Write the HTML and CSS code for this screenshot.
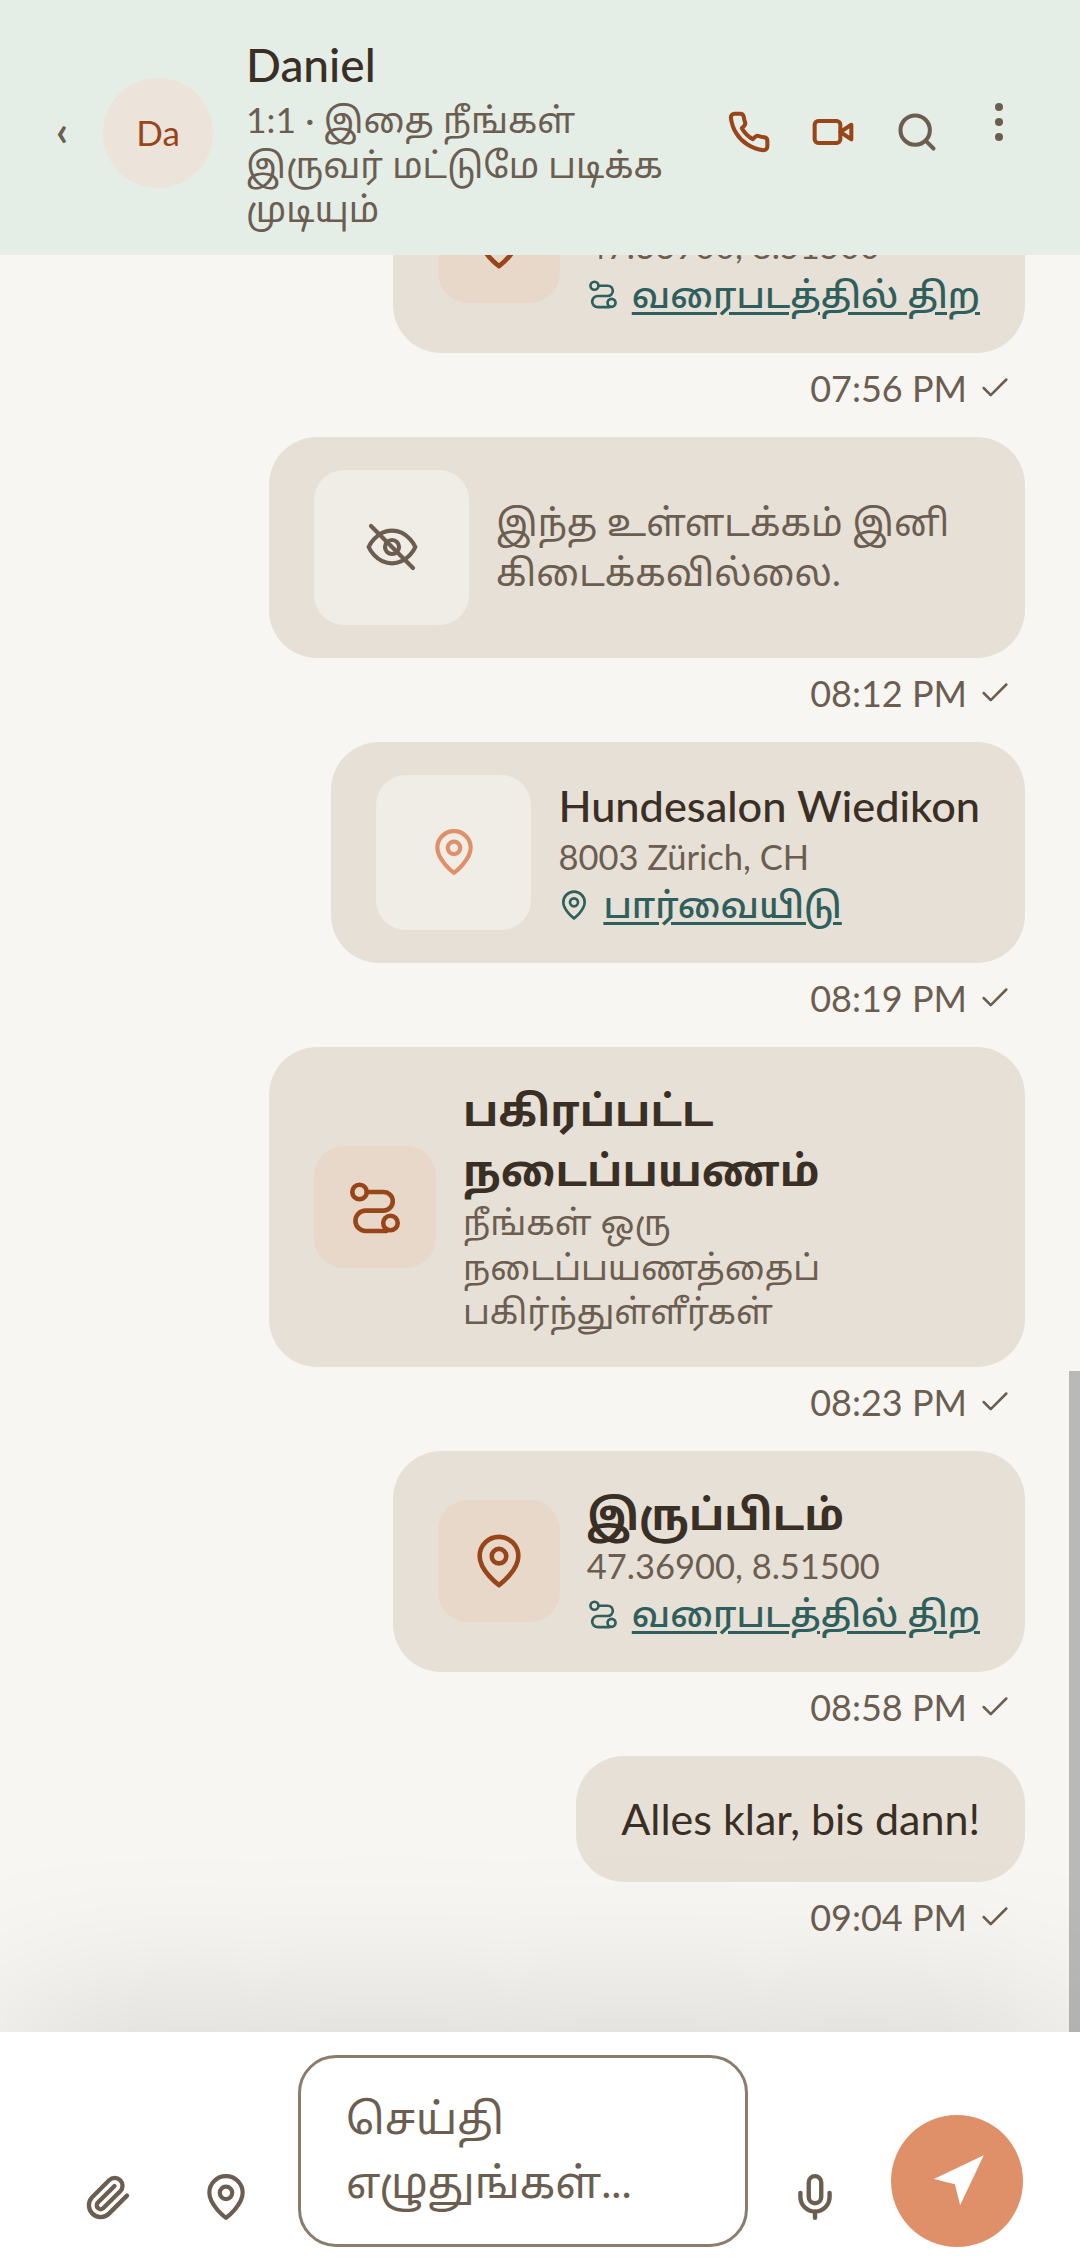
FILE: index.html
```html
<!DOCTYPE html>
<html lang="ta">
<head>
<meta charset="utf-8" />
<title>Daniel</title>
<link rel="stylesheet" href="styles.css">
</head>
<body>
<section class="app">
  <header class="top">
    <span class="back">‹</span>
    <div class="avatar">Da</div>
    <div class="who">
      <h1>Daniel</h1>
      <p>1:1 · இதை நீங்கள் இருவர் மட்டுமே படிக்க முடியும்</p>
    </div>
    <div class="actions">
      <svg class="ic rust" viewBox="0 0 24 24"><path d="M22 16.92v3a2 2 0 0 1-2.18 2 19.79 19.79 0 0 1-8.63-3.07 19.5 19.5 0 0 1-6-6 19.79 19.79 0 0 1-3.07-8.67A2 2 0 0 1 4.11 2h3a2 2 0 0 1 2 1.72 12.84 12.84 0 0 0 .7 2.81 2 2 0 0 1-.45 2.11L8.09 9.91a16 16 0 0 0 6 6l1.27-1.27a2 2 0 0 1 2.11-.45 12.84 12.84 0 0 0 2.81.7A2 2 0 0 1 22 16.92z"/></svg>
      <svg class="ic rust" viewBox="0 0 24 24"><rect x="2" y="6" width="14" height="12" rx="2"/><path d="m22 8-6 4 6 4V8Z"/></svg>
      <svg class="ic" viewBox="0 0 24 24"><circle cx="11" cy="11" r="8"/><path d="m21 21-4.3-4.3"/></svg>
      <div class="dots"><i></i><i></i><i></i></div>
    </div>
  </header>

  <main class="chat">
    <div class="msg">
      <div class="bubble">
        <div class="tile warm"><svg class="ic pin-l rust" viewBox="0 0 24 24"><path d="M20 10c0 6-8 12-8 12s-8-6-8-12a8 8 0 0 1 16 0Z"/><circle cx="12" cy="10" r="3"/></svg></div>
        <div class="body">
          <h2>இருப்பிடம்</h2>
          <p class="sub">47.36900, 8.51500</p>
          <p class="link"><svg class="ic-s" viewBox="0 0 24 24"><circle cx="5.6" cy="5.8" r="3"/><path d="M8.6 5.8h6.9a3.85 3.85 0 0 1 0 7.7H8.1a4.2 4.2 0 0 0 0 8.4h8.6"/><circle cx="18.4" cy="18.6" r="3"/></svg><a>வரைபடத்தில் திற</a></p>
        </div>
      </div>
      <div class="time">07:56 PM <svg class="tick" viewBox="0 0 24 24"><path d="M20 6 9 17l-5-5"/></svg></div>
    </div>

    <div class="msg">
      <div class="bubble">
        <div class="tile big"><svg class="ic eye" viewBox="0 0 24 24"><path d="M2 12s3-7 10-7 10 7 10 7-3 7-10 7-10-7-10-7Z"/><circle cx="12" cy="12" r="3"/><path d="m3 3 18 18"/></svg></div>
        <p class="note">இந்த உள்ளடக்கம் இனி கிடைக்கவில்லை.</p>
      </div>
      <div class="time">08:12 PM <svg class="tick" viewBox="0 0 24 24"><path d="M20 6 9 17l-5-5"/></svg></div>
    </div>

    <div class="msg">
      <div class="bubble">
        <div class="tile big"><svg class="ic pin-m peach" viewBox="0 0 24 24"><path d="M20 10c0 6-8 12-8 12s-8-6-8-12a8 8 0 0 1 16 0Z"/><circle cx="12" cy="10" r="3"/></svg></div>
        <div class="body">
          <h3>Hundesalon Wiedikon</h3>
          <p class="sub">8003 Zürich, CH</p>
          <p class="link"><svg class="ic-s" viewBox="0 0 24 24"><path d="M20 10c0 6-8 12-8 12s-8-6-8-12a8 8 0 0 1 16 0Z"/><circle cx="12" cy="10" r="3"/></svg><a>பார்வையிடு</a></p>
        </div>
      </div>
      <div class="time">08:19 PM <svg class="tick" viewBox="0 0 24 24"><path d="M20 6 9 17l-5-5"/></svg></div>
    </div>

    <div class="msg">
      <div class="bubble">
        <div class="tile warm"><svg class="ic pin-l rust" viewBox="0 0 24 24"><circle cx="5.6" cy="5.8" r="3"/><path d="M8.6 5.8h6.9a3.85 3.85 0 0 1 0 7.7H8.1a4.2 4.2 0 0 0 0 8.4h8.6"/><circle cx="18.4" cy="18.6" r="3"/></svg></div>
        <div class="body narrow">
          <h2>பகிரப்பட்ட நடைப்பயணம்</h2>
          <p class="sub">நீங்கள் ஒரு நடைப்பயணத்தைப் பகிர்ந்துள்ளீர்கள்</p>
        </div>
      </div>
      <div class="time">08:23 PM <svg class="tick" viewBox="0 0 24 24"><path d="M20 6 9 17l-5-5"/></svg></div>
    </div>

    <div class="msg">
      <div class="bubble">
        <div class="tile warm"><svg class="ic pin-l rust" viewBox="0 0 24 24"><path d="M20 10c0 6-8 12-8 12s-8-6-8-12a8 8 0 0 1 16 0Z"/><circle cx="12" cy="10" r="3"/></svg></div>
        <div class="body">
          <h2>இருப்பிடம்</h2>
          <p class="sub">47.36900, 8.51500</p>
          <p class="link"><svg class="ic-s" viewBox="0 0 24 24"><circle cx="5.6" cy="5.8" r="3"/><path d="M8.6 5.8h6.9a3.85 3.85 0 0 1 0 7.7H8.1a4.2 4.2 0 0 0 0 8.4h8.6"/><circle cx="18.4" cy="18.6" r="3"/></svg><a>வரைபடத்தில் திற</a></p>
        </div>
      </div>
      <div class="time">08:58 PM <svg class="tick" viewBox="0 0 24 24"><path d="M20 6 9 17l-5-5"/></svg></div>
    </div>

    <div class="msg">
      <div class="bubble plain">Alles klar, bis dann!</div>
      <div class="time">09:04 PM <svg class="tick" viewBox="0 0 24 24"><path d="M20 6 9 17l-5-5"/></svg></div>
    </div>

    <div class="thumb"></div>
  </main>

  <footer class="bar">
    <div class="tool"><svg class="ic clip" viewBox="0 0 24 24"><path d="m21.44 11.05-9.19 9.19a6 6 0 0 1-8.49-8.49l8.57-8.57A4 4 0 1 1 18 8.84l-8.59 8.57a2 2 0 0 1-2.83-2.83l8.49-8.48"/></svg></div>
    <div class="tool"><svg class="ic pin-m" viewBox="0 0 24 24"><path d="M20 10c0 6-8 12-8 12s-8-6-8-12a8 8 0 0 1 16 0Z"/><circle cx="12" cy="10" r="3"/></svg></div>
    <div class="input">செய்தி எழுதுங்கள்...</div>
    <div class="tool"><svg class="ic mic" viewBox="0 0 24 24"><path d="M12 2a3 3 0 0 0-3 3v7a3 3 0 0 0 6 0V5a3 3 0 0 0-3-3Z"/><path d="M19 10v2a7 7 0 0 1-14 0v-2"/><path d="M12 19v3"/></svg></div>
    <div class="send"><svg viewBox="0 0 24 24"><polygon points="3 11 22 2 13 21 11 13 3 11"/></svg></div>
  </footer>
</section>
</body>
</html>
```

FILE: styles.css
```css
* {
  box-sizing: border-box;
}

body {
  margin: 0;
  font: normal 36px/1.25 Lato, "Noto Sans Tamil", "Noto Sans", sans-serif;
  color: #3a2f25;
  background: #f8f6f3;
}

h1, h2, h3, p {
  margin: 0;
}

.app {
  width: 1080px;
  height: 2268px;
  display: flex;
  flex-direction: column;
  overflow: hidden;
}

/* header */

.top {
  flex: none;
  height: 255px;
  display: flex;
  align-items: flex-start;
  background: #e5ede7;
  position: relative;
  z-index: 2;
}

.back {
  width: 103px;
  padding: 108px 0 0 56px;
  font-size: 42px;
  font-weight: 700;
  line-height: 44px;
  color: #6b5e50;
}

.avatar {
  flex: none;
  width: 110px;
  height: 110px;
  margin-top: 78px;
  border-radius: 50%;
  background: #ece4da;
  color: #98451a;
  font-size: 35px;
  display: flex;
  align-items: center;
  justify-content: center;
}

.who {
  width: 440px;
  margin: 36px 0 0 33px;
}

.who h1 {
  font-size: 46px;
  line-height: 58px;
  font-weight: 500;
}

.who p {
  font-size: 35.5px;
  line-height: 44.5px;
  color: #6b5e50;
  padding-top: 4px;
}

.actions {
  display: flex;
  align-items: center;
  gap: 40px;
  margin: 110px 0 0 41px;
}

.actions .ic {
  stroke-width: 2.2;
}

.dots {
  display: flex;
  flex-direction: column;
  gap: 7px;
  margin: -20px 0 0 16px;
}

.dots i {
  width: 8px;
  height: 8px;
  border-radius: 50%;
  background: #6b5e50;
}

/* icons */

.ic, .ic-s, .tick {
  flex: none;
  fill: none;
  stroke: #6b5e50;
  stroke-width: 2;
  stroke-linecap: round;
  stroke-linejoin: round;
}

.ic {
  width: 44px;
  height: 44px;
}

.ic.rust {
  stroke: #98451a;
}

.ic.peach {
  stroke: #e09069;
}

.ic.pin-l {
  width: 58px;
  height: 58px;
  stroke-width: 1.9;
}

.ic.pin-m {
  width: 50px;
  height: 50px;
  stroke-width: 2;
}

.ic.eye {
  width: 56px;
  height: 56px;
  stroke-width: 1.8;
}

.ic.clip {
  width: 47px;
  height: 47px;
  stroke-width: 2.2;
}

.ic.mic {
  width: 50px;
  height: 50px;
  stroke-width: 2.1;
  margin-right: 2px;
}

.ic-s {
  width: 32px;
  height: 32px;
  stroke: #2e5f5c;
  margin-right: 13px;
}

.tick {
  width: 34px;
  height: 34px;
  margin: 0 13px 0 11px;
  stroke-width: 1.8;
}

/* messages */

.chat {
  flex: 1;
  min-height: 0;
  position: relative;
  display: flex;
  flex-direction: column;
  justify-content: flex-end;
  align-items: flex-end;
  padding: 0 55px 90px 0;
}

.msg {
  flex: none;
  display: flex;
  flex-direction: column;
  align-items: flex-end;
  margin-top: 24px;
}

.bubble {
  display: flex;
  align-items: center;
  gap: 27px;
  padding: 33px 45px;
  border-radius: 48px;
  background: #e7e0d7;
}

.bubble.plain {
  display: block;
  font-size: 43px;
  line-height: 60px;
}

.tile {
  flex: none;
  width: 122px;
  height: 122px;
  border-radius: 30px;
  display: flex;
  align-items: center;
  justify-content: center;
}

.tile.warm {
  background: #e8d8ca;
}

.tile.big {
  width: 155px;
  height: 155px;
  background: #f0ece6;
}

.body h2 {
  font-size: 42.5px;
  line-height: 60px;
  font-weight: 700;
}

.body h3 {
  font-size: 43.3px;
  line-height: 60px;
  font-weight: 500;
}

.narrow {
  width: 517px;
}

.sub {
  font-size: 34.5px;
  line-height: 44.5px;
  color: #6b5e50;
}

.link {
  display: flex;
  align-items: center;
  font-size: 35.8px;
  font-weight: 500;
  line-height: 51px;
  color: #2e5f5c;
}

.link a {
  text-decoration: underline;
  text-decoration-thickness: 2.5px;
  text-underline-offset: 4px;
}

.note {
  width: 484px;
  font-size: 37px;
  line-height: 50px;
  color: #6b5e50;
}

.time {
  display: flex;
  align-items: center;
  margin-top: 10px;
  font-size: 36px;
  line-height: 50px;
  color: #6b5e50;
}

.thumb {
  position: absolute;
  right: 0;
  bottom: 0;
  width: 11px;
  height: 661px;
  background: #b9b9b8;
}

/* input bar */

.bar {
  flex: none;
  height: 236px;
  display: flex;
  align-items: flex-end;
  padding: 0 0 21px 49px;
  background: #fff;
  box-shadow: 0 0 180px rgba(0, 0, 0, 0.17);
  position: relative;
}

.tool {
  width: 118px;
  height: 100px;
  display: flex;
  align-items: center;
  justify-content: center;
  flex: none;
}

.input {
  width: 450px;
  height: 192px;
  margin: 0 9px 0 13px;
  padding: 28px 45px;
  border: 3px solid #8a7d6d;
  border-radius: 38px;
  font-size: 43px;
  line-height: 64px;
  color: #6b5e50;
}

.send {
  width: 132px;
  height: 132px;
  margin-left: 16px;
  border-radius: 50%;
  background: #e09069;
  display: flex;
  align-items: center;
  justify-content: center;
}

.send svg {
  width: 63px;
  height: 63px;
  fill: #fff;
}
```
